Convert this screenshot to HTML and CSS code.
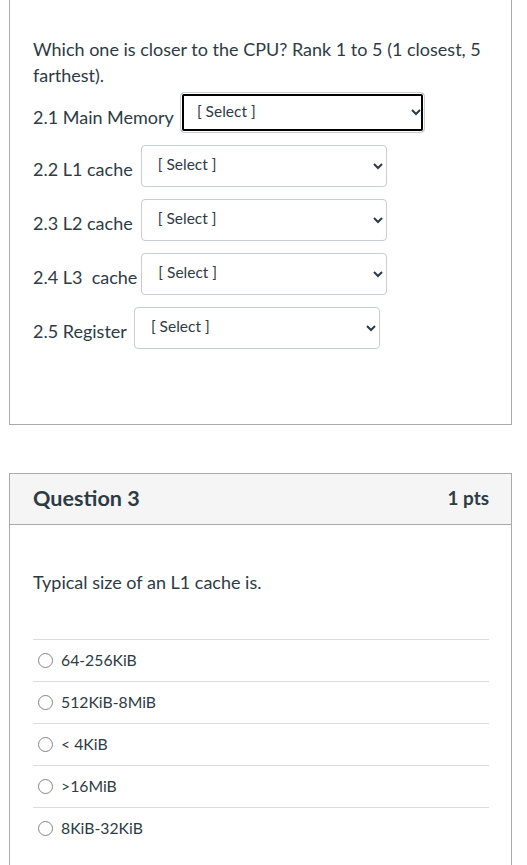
FILE: index.html
```html
<!DOCTYPE html>
<html>
<head>
<meta charset="utf-8">
<link rel="stylesheet" href="styles.css">
</head>
<body>
<div class="page">
  <section class="card card-top">
    <div class="card-body q2">
      <p class="qtext">Which one is closer to the CPU? Rank 1 to 5 (1 closest, 5 farthest).</p>
      <div class="rows">
        <div class="row"><span class="lbl">2.1 Main Memory</span><select class="sel sel-focus sel-mm"><option>[ Select ]</option></select></div>
        <div class="row"><span class="lbl">2.2 L1 cache</span><select class="sel sel-c1"><option>[ Select ]</option></select></div>
        <div class="row"><span class="lbl">2.3 L2 cache</span><select class="sel sel-c2"><option>[ Select ]</option></select></div>
        <div class="row"><span class="lbl">2.4 L3&nbsp; cache</span><select class="sel sel-c3"><option>[ Select ]</option></select></div>
        <div class="row"><span class="lbl">2.5 Register</span><select class="sel sel-reg"><option>[ Select ]</option></select></div>
      </div>
    </div>
  </section>

  <section class="card card-q3">
    <header class="card-head">
      <h2 class="qname">Question 3</h2>
      <span class="pts">1 pts</span>
    </header>
    <div class="card-body q3">
      <p class="qtext">Typical size of an L1 cache is.</p>
      <div class="answers">
        <label class="ans"><span class="radio"></span><span class="atext">64-256KiB</span></label>
        <label class="ans"><span class="radio"></span><span class="atext">512KiB-8MiB</span></label>
        <label class="ans"><span class="radio"></span><span class="atext">&lt; 4KiB</span></label>
        <label class="ans"><span class="radio"></span><span class="atext">&gt;16MiB</span></label>
        <label class="ans"><span class="radio"></span><span class="atext">8KiB-32KiB</span></label>
      </div>
    </div>
  </section>
</div>
</body>
</html>
```

FILE: styles.css
```css
html, body {
  margin: 0;
  padding: 0;
  background: #fff;
}
body {
  font-family: Lato, "Liberation Sans", sans-serif;
  color: #2d3b45;
  font-size: 18px;
  line-height: 26px;
  overflow: hidden;
}
.page {
  padding-left: 9px;
  width: 503px;
}
.card {
  border: 1px solid #aaa;
  background: #fff;
}
.card-top {
  margin-top: -1px;
}
.card-body {
  padding: 0 23px;
}
.q2 {
  padding-top: 36px;
  padding-bottom: 75px;
}
.qtext {
  margin: 0;
}
.q2 .qtext {
  margin-bottom: 5px;
}
.rows {
  display: flex;
  flex-direction: column;
  gap: 12px;
}
.row {
  display: flex;
  align-items: flex-start;
}
.lbl {
  padding-top: 11px;
  white-space: nowrap;
}
.sel {
  height: 42px;
  width: 246px;
  font-family: Lato, "Liberation Sans", sans-serif;
  font-size: 15.5px;
  color: #2d3b45;
  background: #fff;
  border: 1px solid #c7cdd1;
  border-radius: 4px;
  padding: 0 9px 4px 12px;
  margin: 0;
}
.sel-mm { margin-left: 6px; margin-top: -1px; height: 41px; width: 245px; }
.sel-c1 { margin-left: 8px; }
.sel-c2 { margin-left: 8px; }
.sel-c3 { margin-left: 4px; }
.sel-reg { margin-left: 7px; }
.sel-focus {
  box-shadow: inset 0 0 0 1px #fff, inset 0 0 0 3px #000;
}
.card-q3 {
  margin-top: 48px;
}
.card-head {
  background: #f5f5f5;
  border-bottom: 1px solid #aaa;
  height: 47px;
  padding: 0 22px 3px 23px;
  display: flex;
  align-items: center;
  justify-content: space-between;
}
.qname {
  margin: 0;
  font-size: 21.6px;
  font-weight: 700;
  line-height: 26px;
}
.pts {
  font-size: 18.9px;
  font-weight: 700;
  line-height: 26px;
}
.q3 {
  padding-top: 44px;
  padding-right: 22px;
  padding-bottom: 40px;
}
.q3 .qtext {
  margin-bottom: 44px;
}
.answers {
  display: flex;
  flex-direction: column;
}
.ans {
  display: flex;
  align-items: center;
  height: 41px;
  border-top: 1px solid #ddd;
  font-size: 15.75px;
}
.radio {
  width: 13px;
  height: 13px;
  border: 1px solid #858585;
  border-radius: 50%;
  margin: 0 8px 0 5px;
  flex: none;
}
.atext {
  line-height: 20px;
  margin-bottom: 2px;
}
```
